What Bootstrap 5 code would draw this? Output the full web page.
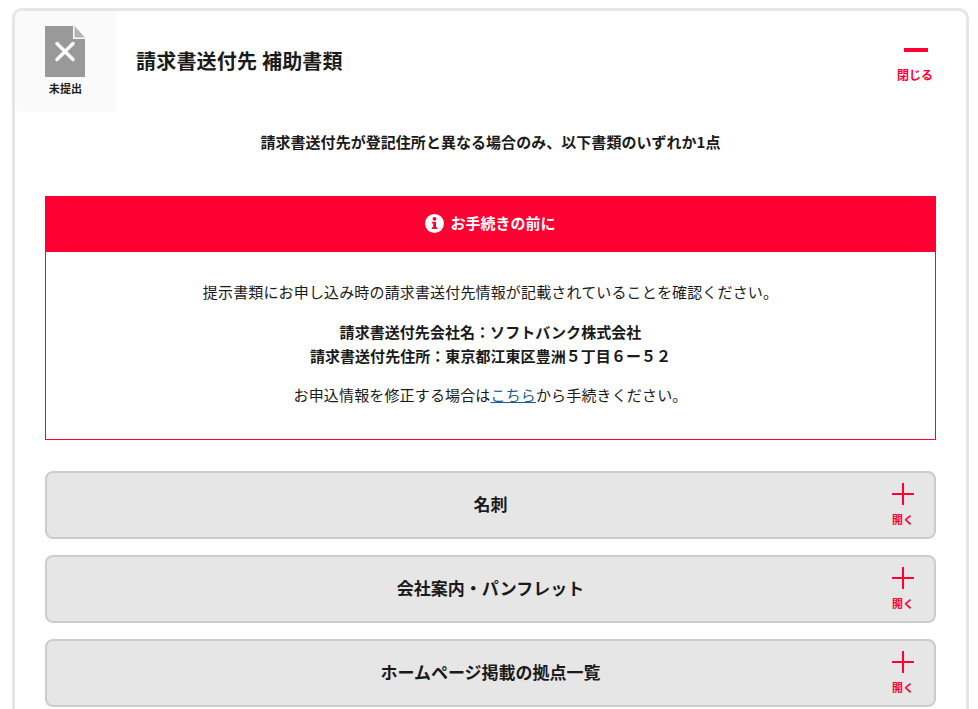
<!DOCTYPE html>
<html lang="ja">
<head>
<meta charset="utf-8">
<title>請求書送付先 補助書類</title>
<link href="https://cdn.jsdelivr.net/npm/bootstrap@5.3.0/dist/css/bootstrap.min.css" rel="stylesheet">
<style>
html,body{height:709px;overflow:hidden;background:#fff}
body{font-family:"Noto Sans CJK JP","Liberation Sans",sans-serif;color:#1a1a1a;font-size:15px}
.doc-shell{margin:8px 9px 0 12px;border:3px solid #e6e6e6;border-radius:10px;background:#fff}
.doc-head{height:101px}
.doc-status{width:101px;height:101px;background:#fafafa;border-radius:7px 0 0 7px;padding-top:15px}
.doc-status svg{display:block;margin:0 auto 0 30px}
.doc-status-label{font-size:11px;font-weight:700;line-height:14px;margin-top:4px;letter-spacing:.2px}
.doc-title{font-size:20px;font-weight:700;margin:0 0 0 20px;line-height:28px;padding-bottom:2px;letter-spacing:.2px}
.doc-close{width:70px;margin-right:16px;color:#f03;font-size:12px;font-weight:700;line-height:16px;padding-top:37px}
.dash{width:24px;height:4px;background:#f03;margin:0 0 15px 24px}
.doc-sub{font-size:15px;font-weight:700;line-height:20px;margin:20px 0 0;letter-spacing:.04px}
.doc-body{padding:0 30px}
.notice{margin-top:44px;border:1px solid #f03}
.notice-head{background:#f03;color:#fff;height:55px;font-weight:700;font-size:15px;padding-bottom:3px}
.notice-head svg{margin-right:6px}
.notice-body{padding:28px 10px 0;height:187px;font-size:15px;letter-spacing:.15px;line-height:24px}
.notice-body p{margin:0 0 15px}
.notice-body .notice-lead{margin-bottom:16px}
.notice-body .notice-addr{letter-spacing:.05px}
.notice-body a{color:#1d5c93}
.fold{height:68px;background:#e6e6e6;border:2px solid #ccc;border-radius:8px;margin-bottom:16px;position:relative;font-size:17px;font-weight:700;padding-bottom:2px}
.fold-ctl{position:absolute;right:11px;top:10px;width:40px;color:#f03;font-size:11px;line-height:14px;text-align:center}
.fold-ctl svg{display:block;margin:0 auto 7px}
.fold-list{margin-top:31px}
</style>
</head>
<body>
<div class="doc-shell">
  <div class="doc-head d-flex align-items-center">
    <div class="doc-status text-center flex-shrink-0">
      <svg width="40" height="51" viewBox="0 0 40 51"><path d="M0 0H28V13H40V51H0Z" fill="#999"/><path d="M29.500 0L40 11.500H29.500Z" fill="#b3b3b3"/><path d="M12 17.500L28 33.500M28 17.500L12 33.500" stroke="#fff" stroke-width="3.500" stroke-linecap="round"/></svg>
      <div class="doc-status-label">未提出</div>
    </div>
    <h1 class="doc-title flex-grow-1">請求書送付先 補助書類</h1>
    <div class="doc-close text-center align-self-start">
      <div class="dash"></div>
      閉じる
    </div>
  </div>
  <div class="doc-body">
    <p class="doc-sub text-center">請求書送付先が登記住所と異なる場合のみ、以下書類のいずれか1点</p>
    <section class="notice">
      <div class="notice-head d-flex align-items-center justify-content-center">
        <svg width="19" height="19" viewBox="0 0 19 19"><circle cx="9.500" cy="9.500" r="9.500" fill="#fff"/><circle cx="9.500" cy="4.800" r="1.900" fill="#f03"/><path d="M6.800 7.800H11V13.300H12.400V15H6.800V13.300H8.200V9.500H6.800Z" fill="#f03"/></svg>
        <span>お手続きの前に</span>
      </div>
      <div class="notice-body text-center">
        <p class="notice-lead">提示書類にお申し込み時の請求書送付先情報が記載されていることを確認ください。</p>
        <p class="fw-bold notice-addr">請求書送付先会社名：ソフトバンク株式会社<br>請求書送付先住所：東京都江東区豊洲５丁目６ー５２</p>
        <p>お申込情報を修正する場合は<a href="#">こちら</a>から手続きください。</p>
      </div>
    </section>
    <div class="fold-list">
      <div class="fold d-flex align-items-center justify-content-center">名刺
        <div class="fold-ctl"><svg width="22" height="22" viewBox="0 0 22 22"><path d="M0 11H22M11 0V22" stroke="#f03" stroke-width="2"/></svg>開く</div>
      </div>
      <div class="fold d-flex align-items-center justify-content-center">会社案内・パンフレット
        <div class="fold-ctl"><svg width="22" height="22" viewBox="0 0 22 22"><path d="M0 11H22M11 0V22" stroke="#f03" stroke-width="2"/></svg>開く</div>
      </div>
      <div class="fold d-flex align-items-center justify-content-center">ホームページ掲載の拠点一覧
        <div class="fold-ctl"><svg width="22" height="22" viewBox="0 0 22 22"><path d="M0 11H22M11 0V22" stroke="#f03" stroke-width="2"/></svg>開く</div>
      </div>
    </div>
  </div>
</div>
<script src="https://cdn.jsdelivr.net/npm/bootstrap@5.3.0/dist/js/bootstrap.bundle.min.js"></script>
</body>
</html>
